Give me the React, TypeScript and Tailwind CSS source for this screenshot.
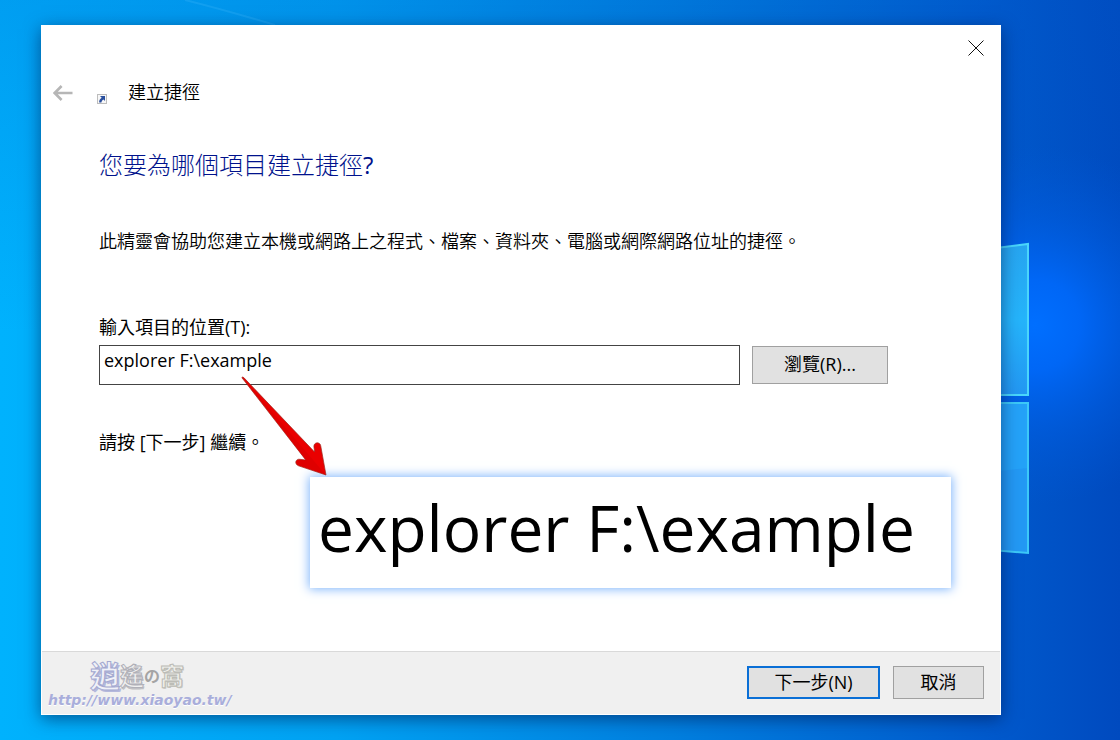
import React from "react";

function Wallpaper() {
  return (
    <svg
      className="absolute inset-0 h-full w-full"
      viewBox="0 0 1120 740"
      preserveAspectRatio="none"
      aria-hidden="true"
    >
      <defs>
        <linearGradient id="sky" x1="0" y1="0" x2="1" y2="0">
          <stop offset="0" stopColor="#00b2fd" />
          <stop offset="0.3" stopColor="#00a2f3" />
          <stop offset="0.6" stopColor="#007fdf" />
          <stop offset="0.88" stopColor="#005acd" />
          <stop offset="1" stopColor="#004abf" />
        </linearGradient>
        <linearGradient id="top" x1="0" y1="0" x2="0" y2="1">
          <stop offset="0" stopColor="#0058c8" stopOpacity="0.22" />
          <stop offset="0.45" stopColor="#0058c8" stopOpacity="0" />
        </linearGradient>
        <radialGradient id="glow" gradientUnits="userSpaceOnUse" cx="1035" cy="325" r="180">
          <stop offset="0" stopColor="#006fff" />
          <stop offset="0.25" stopColor="#0069fb" stopOpacity="0.9" />
          <stop offset="0.6" stopColor="#005fe6" stopOpacity="0.5" />
          <stop offset="1" stopColor="#0058d8" stopOpacity="0" />
        </radialGradient>
        <linearGradient id="pane" x1="0" y1="0" x2="0" y2="1">
          <stop offset="0" stopColor="#27a5f0" />
          <stop offset="0.5" stopColor="#25b4fb" />
          <stop offset="1" stopColor="#2397f2" />
        </linearGradient>
      </defs>
      <rect width="1120" height="740" fill="url(#sky)" />
      <rect width="1120" height="740" fill="url(#top)" />
      <rect width="1120" height="740" fill="url(#glow)" />
      <path d="M185 0 Q225 10 275 25" fill="none" stroke="#22a8f4" strokeWidth="2" opacity="0.5" />
      <path d="M980 250 L1028 244 V395 H980 Z" fill="url(#pane)" />
      <path d="M980 250 L1028 244 V395 H980" fill="none" stroke="#4ad6fb" strokeWidth="2" />
      <path d="M980 403 H1028 V553 L980 549 Z" fill="#2399f4" />
      <path d="M980 403 H1028 V468 L980 473 Z" fill="#24a2f8" />
      <path d="M980 403 H1028 V553 L980 549" fill="none" stroke="#3cc9f8" strokeWidth="2" />
    </svg>
  );
}

function BackIcon() {
  return (
    <svg width="20" height="16" viewBox="0 0 20 16" fill="none" stroke="#b6b6b6" strokeWidth="2.6" aria-hidden="true">
      <path d="M1.6 8H19.5M8.6 1L1.7 8L8.6 15" />
    </svg>
  );
}

function ShortcutIcon() {
  return (
    <svg width="10" height="10" viewBox="0 0 10 10" aria-hidden="true">
      <rect x="0.5" y="0.5" width="9" height="9" fill="#f7f7f7" stroke="#bdbdbd" />
      <path d="M3 2H8V7L6.5 5.6C5.2 6.4 4.7 7.1 4.4 8.6H2.2C2 6.4 2.9 4.9 4.7 3.8Z" fill="#2a4f9e" />
    </svg>
  );
}

function CloseIcon() {
  return (
    <svg width="16" height="16" viewBox="0 0 16 16" stroke="#111111" strokeWidth="1" aria-hidden="true">
      <path d="M0.5 0.5L15.5 15.5M15.5 0.5L0.5 15.5" />
    </svg>
  );
}

function RedArrow() {
  return (
    <svg
      className="pointer-events-none absolute -top-[103px] -left-[70px]"
      width="90"
      height="104"
      viewBox="0 0 90 104"
      aria-hidden="true"
    >
      <path
        d="M1.8 3.6 Q2.6 2.4 3.8 3.6 L74.6 78 L73.9 72.5 C73.7 68 80 67.5 80.7 71.7 L86 101 L58.5 91.8 C54 90 55.5 84.5 60 85.3 L65.8 86 Z"
        fill="#ea0000"
        stroke="#9d2a20"
        strokeWidth="0.7"
        strokeLinejoin="round"
      />
      <path d="M2.5 3.2 L65.8 86 L60 86 C56 86 56 90 59 91.2 L85.5 100.5 Z" fill="#d90000" opacity="0.65" />
    </svg>
  );
}

function Watermark() {
  return (
    <div className="flex flex-col pt-1">
      <div className="flex h-[30px] items-center pl-12 leading-none font-bold">
        <span className="text-[30px] text-[#f0f1f8] [-webkit-text-stroke:1px_#a4a9d0] [text-shadow:2px_2px_0_#b4b8dc]">逍</span>
        <span className="text-[24px] text-[#efefef] [-webkit-text-stroke:1px_#b0b0b8] [text-shadow:1px_2px_0_#c0c0c4]">遙</span>
        <span className="text-[16px] text-[#a4a4a4]">の</span>
        <span className="text-[24px] text-[#efefeb] [-webkit-text-stroke:1px_#bcbcb6] [text-shadow:1px_1px_0_#cacac4]">窩</span>
      </div>
      <a
        href="http://www.xiaoyao.tw/"
        className="pl-1.5 font-['DejaVu_Sans',sans-serif] text-[14px] leading-[18px] font-bold text-[#a9aedb] italic [text-shadow:0_1px_0_#ffffff]"
      >
        http://www.xiaoyao.tw/
      </a>
    </div>
  );
}

export default function App() {
  return (
    <div className="relative flex min-h-screen flex-col overflow-hidden bg-[#0088e5] py-[25px] pr-[119px] pl-[41px] font-['Open_Sans','Noto_Sans_CJK_TC',sans-serif] text-[18px] leading-6 font-normal text-black">
      <Wallpaper />
      <main
        role="dialog"
        aria-labelledby="wizard-title"
        className="relative flex flex-1 flex-col bg-white shadow-[0_4px_16px_rgba(0,20,70,0.55)]"
      >
        <div className="flex justify-end">
          <button type="button" aria-label="關閉" className="flex h-[45px] w-[51px] items-center justify-center">
            <CloseIcon />
          </button>
        </div>
        <header className="flex h-[46px] items-center pl-3">
          <button type="button" aria-label="上一步" className="flex w-11 items-center">
            <BackIcon />
          </button>
          <span className="w-[31px] pt-3">
            <ShortcutIcon />
          </span>
          <span id="wizard-title" className="pb-0.5 font-[350]">建立捷徑</span>
        </header>

        <section className="flex flex-1 flex-col pr-[50px] pb-[63px] pl-[58px]">
          <h1 className="mt-[33px] text-[24px] leading-8 font-light text-[#00128c]">
            您要為哪個項目建立捷徑<span className="font-normal">?</span>
          </h1>
          <p className="mt-12 font-[350]">此精靈會協助您建立本機或網路上之程式、檔案、資料夾、電腦或網際網路位址的捷徑。</p>
          <label htmlFor="location" className="mt-[62px]">
            輸入項目的位置(T):
          </label>
          <div className="mt-1.5 flex items-center gap-3 pr-[63px]">
            <input
              id="location"
              type="text"
              defaultValue="explorer F:\example"
              className="h-10 min-w-0 flex-1 border border-[#444444] bg-white px-1 pb-2.5 outline-none"
            />
            <button type="button" className="h-[38px] w-[136px] border border-[#a0a0a0] bg-[#e1e1e1] pb-0.5">
              瀏覽(R)...
            </button>
          </div>
          <p className="mt-[45px]">請按 [下一步] 繼續。</p>
          <div className="relative mt-[23px] ml-[211px] flex h-[111px] items-center bg-white pb-2.5 pl-2 text-[64px] leading-[80px] whitespace-nowrap shadow-[0_0_10px_1px_#7db4fb]">
            explorer F:\example
            <RedArrow />
          </div>
        </section>

        <footer className="mx-px mb-px flex h-[63px] items-center justify-between border-t border-[#d9d9d9] bg-[#f0f0f0] pr-4">
          <Watermark />
          <div className="flex gap-[13px] pb-0.5">
            <button type="button" className="h-[33px] w-[133px] border-2 border-[#0a6fd6] bg-[#e1e1e1]">
              下一步(N)
            </button>
            <button type="button" className="h-[33px] w-[91px] border border-[#a0a0a0] bg-[#e1e1e1]">
              取消
            </button>
          </div>
        </footer>
      </main>
    </div>
  );
}
